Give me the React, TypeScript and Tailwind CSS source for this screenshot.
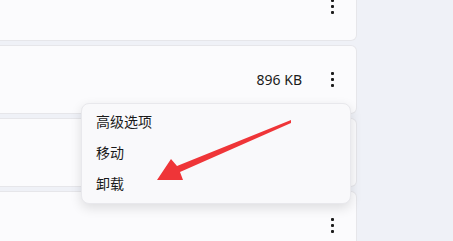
import React from 'react';

const font = { fontFamily: '"Segoe UI", "Noto Sans", "Noto Sans CJK SC", sans-serif' };

const Dots = () => (
  <div className="flex w-4 flex-col items-center gap-[3px]">
    <span className="h-[3px] w-[3px] rounded-[1px] bg-[#1c1c1c]" />
    <span className="h-[3px] w-[3px] rounded-[1px] bg-[#1c1c1c]" />
    <span className="h-[3px] w-[3px] rounded-[1px] bg-[#1c1c1c]" />
  </div>
);

const Card = ({ size }: { size?: string }) => (
  <div className="flex h-[69px] shrink-0 items-center justify-end rounded-r-[6px] border border-l-0 border-[#e6e6ea] bg-[#fbfbfd] pr-[16px]">
    {size && <span className="mr-[22px] text-[14px] text-[#1b1b1b]">{size}</span>}
    <Dots />
  </div>
);

export default function App() {
  return (
    <div className="relative h-[241px] w-[453px] overflow-hidden bg-[#eff1f7]" style={font}>
      <div className="mt-[-28px] flex w-[357px] flex-col gap-[4px]">
        <Card />
        <Card size="896 KB" />
        <Card />
        <Card />
      </div>

      {/* context menu */}
      <div className="absolute left-[81px] top-[103px] flex w-[270px] flex-col rounded-[8px] border border-[#e8e8ec] bg-[#f9f9fb] pt-[2px] pb-[4px] shadow-[0_4px_12px_rgba(0,0,0,0.12)]">
        {['高级选项', '移动', '卸载'].map((label) => (
          <div key={label} className="flex h-[31px] items-center px-[14px] text-[14px] text-[#1b1b1b]">
            {label}
          </div>
        ))}
      </div>

      {/* annotation arrow */}
      <svg className="absolute left-0 top-0" width="453" height="241" viewBox="0 0 453 241">
        <polygon
          points="291,120 177,166 171,159 157,180 183,180 180,172 291,123"
          fill="#ef3538"
        />
      </svg>
    </div>
  );
}
